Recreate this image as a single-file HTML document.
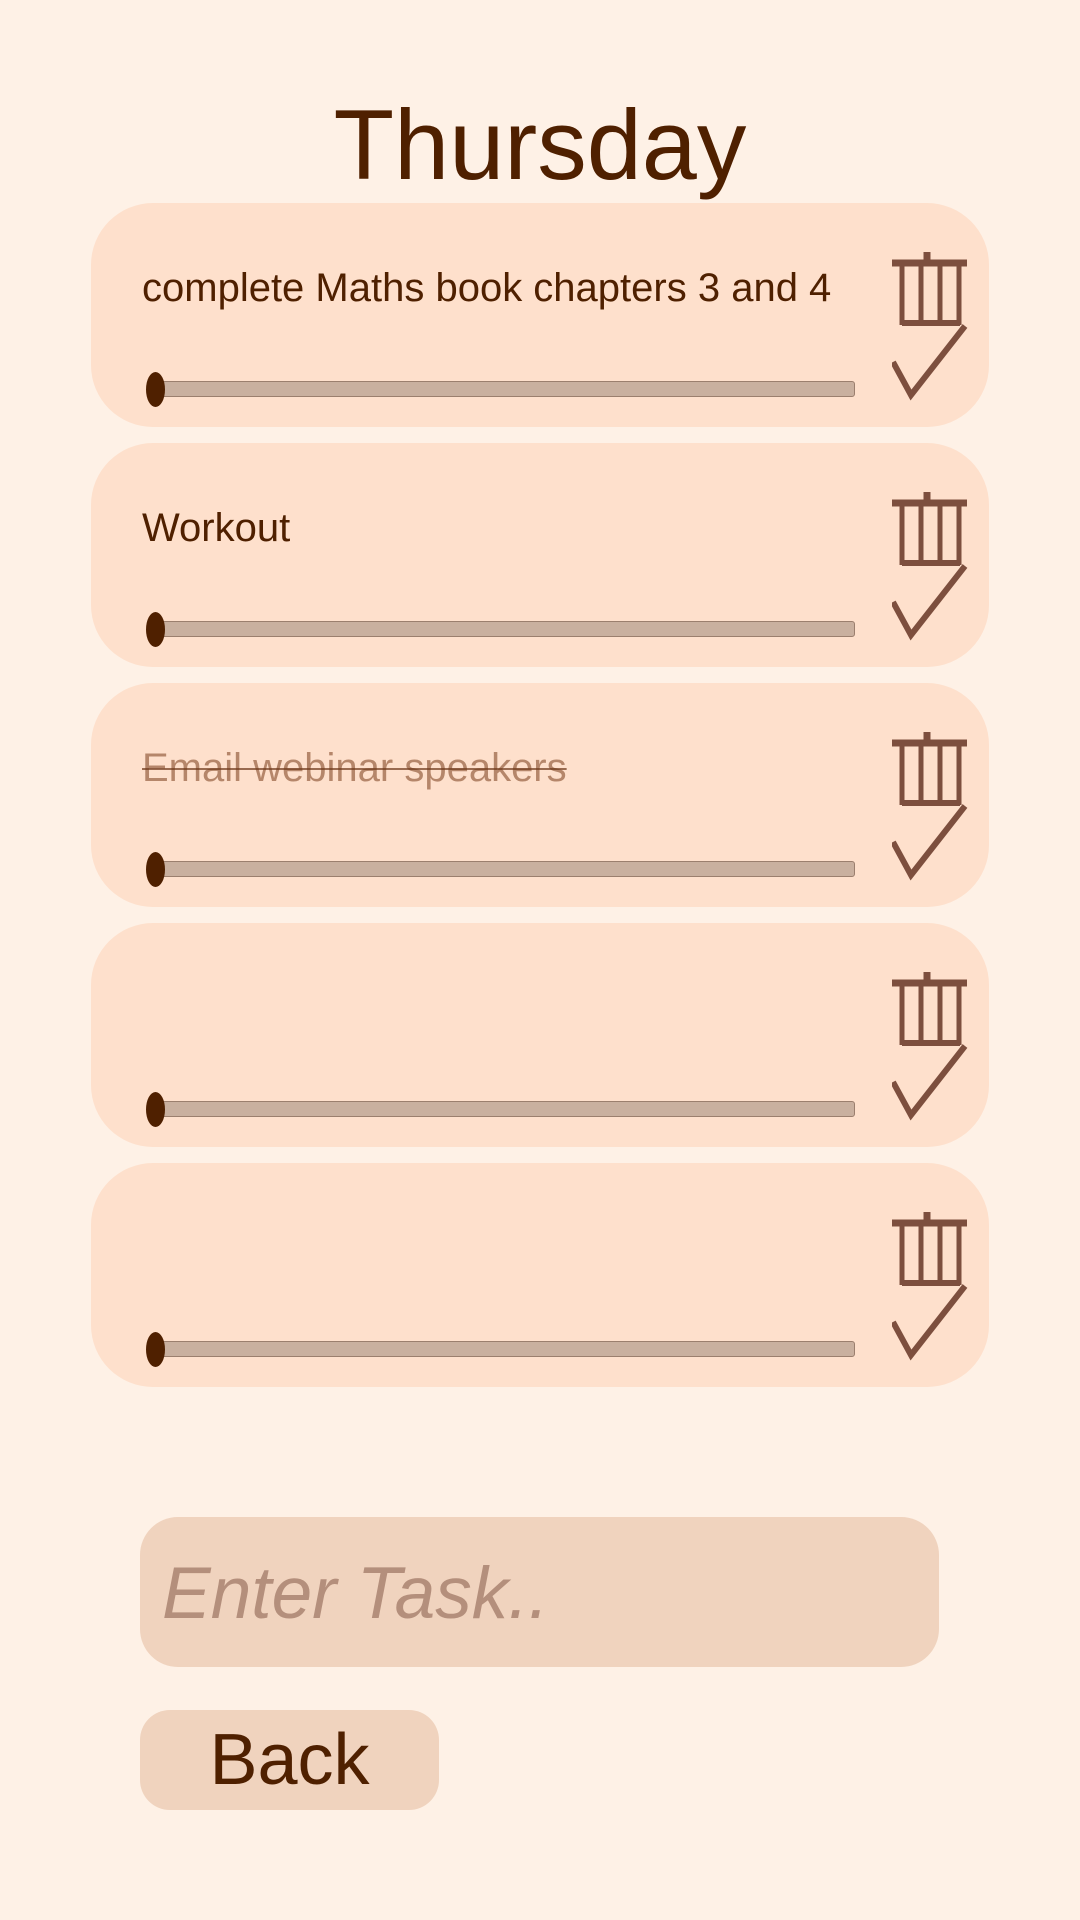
<!DOCTYPE html>
<html><head><meta charset="utf-8"><style>
html,body{margin:0;padding:0;}
body{width:1080px;height:1920px;background:#fef1e6;position:relative;overflow:hidden;font-family:"Liberation Sans",Arial,sans-serif;}
.title{position:absolute;left:0;width:1080px;top:90px;text-align:center;font-size:99px;line-height:110px;color:#4f2000;}
.card{position:absolute;left:91px;width:898px;height:224px;border-radius:62px;background:#fee0cc;}
.txt{position:absolute;left:51px;top:62px;font-size:40px;line-height:46px;color:#4f2000;white-space:nowrap;}
.done{color:rgba(120,60,25,0.55);text-decoration:line-through;text-decoration-color:rgba(110,55,25,0.7);text-decoration-thickness:2px;}
.track{position:absolute;left:60px;top:178px;width:704px;height:16px;border-radius:3px;background:#c9b09f;border:1px solid #9b7f6e;box-sizing:border-box;}
.thumb{position:absolute;left:55px;top:169px;width:19px;height:35px;border-radius:50%;background:#4f2000;}
.ic{position:absolute;left:801px;top:47px;}
.input{position:absolute;left:140px;top:1517px;width:799px;height:150px;border-radius:38px;background:#f0d3be;}
.ph{position:absolute;left:22px;top:37px;font-size:73px;line-height:80px;font-style:italic;color:#b48f7c;}
.back{position:absolute;left:140px;top:1710px;width:299px;height:100px;border-radius:30px;background:#f0d3be;text-align:center;font-size:72px;line-height:100px;color:#4f2000;}
</style></head><body>
<div class="title">Thursday</div>

<div class="card" style="top:203px"><div class="txt">complete Maths book chapters 3 and 4</div><div class="track"></div><div class="thumb"></div>
<svg class="ic" width="80" height="155" viewBox="0 0 80 155" fill="none" stroke="#7d4f3e"><path d="M0 13H75" stroke-width="7"/><path d="M35 2V13" stroke-width="7"/><path d="M10 13V75M29 13V75M48 13V75M67 13V75" stroke-width="5"/><path d="M10 73H68" stroke-width="6"/><path d="M1 112L19 145L73 76" stroke-width="6"/></svg></div>

<div class="card" style="top:443px"><div class="txt">Workout</div><div class="track"></div><div class="thumb"></div>
<svg class="ic" width="80" height="155" viewBox="0 0 80 155" fill="none" stroke="#7d4f3e"><path d="M0 13H75" stroke-width="7"/><path d="M35 2V13" stroke-width="7"/><path d="M10 13V75M29 13V75M48 13V75M67 13V75" stroke-width="5"/><path d="M10 73H68" stroke-width="6"/><path d="M1 112L19 145L73 76" stroke-width="6"/></svg></div>

<div class="card" style="top:683px"><div class="txt done">Email webinar speakers</div><div class="track"></div><div class="thumb"></div>
<svg class="ic" width="80" height="155" viewBox="0 0 80 155" fill="none" stroke="#7d4f3e"><path d="M0 13H75" stroke-width="7"/><path d="M35 2V13" stroke-width="7"/><path d="M10 13V75M29 13V75M48 13V75M67 13V75" stroke-width="5"/><path d="M10 73H68" stroke-width="6"/><path d="M1 112L19 145L73 76" stroke-width="6"/></svg></div>

<div class="card" style="top:923px"><div class="track"></div><div class="thumb"></div>
<svg class="ic" width="80" height="155" viewBox="0 0 80 155" fill="none" stroke="#7d4f3e"><path d="M0 13H75" stroke-width="7"/><path d="M35 2V13" stroke-width="7"/><path d="M10 13V75M29 13V75M48 13V75M67 13V75" stroke-width="5"/><path d="M10 73H68" stroke-width="6"/><path d="M1 112L19 145L73 76" stroke-width="6"/></svg></div>

<div class="card" style="top:1163px"><div class="track"></div><div class="thumb"></div>
<svg class="ic" width="80" height="155" viewBox="0 0 80 155" fill="none" stroke="#7d4f3e"><path d="M0 13H75" stroke-width="7"/><path d="M35 2V13" stroke-width="7"/><path d="M10 13V75M29 13V75M48 13V75M67 13V75" stroke-width="5"/><path d="M10 73H68" stroke-width="6"/><path d="M1 112L19 145L73 76" stroke-width="6"/></svg></div>

<div class="input"><div class="ph">Enter Task..</div></div>
<div class="back">Back</div>
</body></html>
